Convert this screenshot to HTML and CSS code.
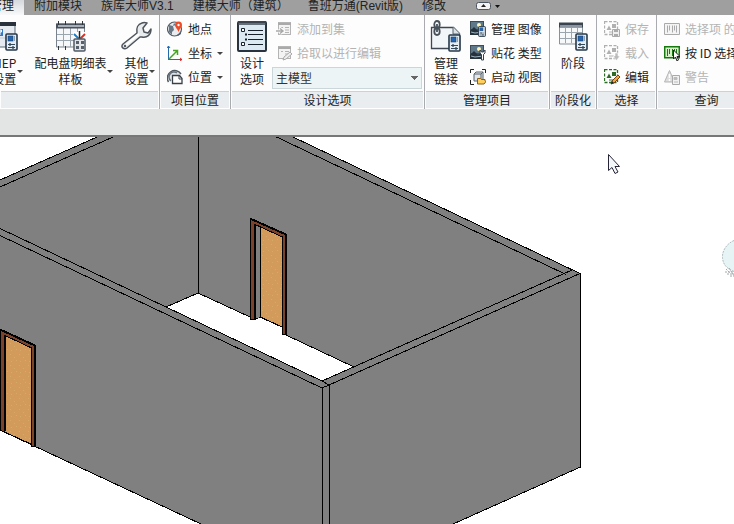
FILE: index.html
```html
<!DOCTYPE html>
<html lang="zh-CN">
<head>
<meta charset="utf-8">
<title>管理</title>
<link rel="stylesheet" href="styles.css">
</head>
<body>
<svg class="sprite" aria-hidden="true">
  <symbol id="device" viewBox="0 0 13 18">
    <rect x="1" y="1" width="11" height="16" rx="1" fill="#e4edf3" stroke="#26384a" stroke-width="1.6"/>
    <rect x="3" y="3" width="5" height="5" fill="#2465ad" stroke="#173f70" stroke-width=".6"/>
    <path d="M9.500 3v5" stroke="#8da0b0"/>
    <path d="M3 11.500h7M3 14.500h7" stroke="#34495b"/>
    <path d="M5 10v3M8 13v3" stroke="#34495b" stroke-width="1.300"/>
  </symbol>
  <symbol id="photo" viewBox="0 0 14 14">
    <rect width="14" height="14" fill="#3c4d5a"/>
    <rect x="1" y="1" width="12" height="7" fill="#60798a"/>
    <circle cx="9" cy="4" r="2" fill="#fff6b8"/>
    <path d="M0 10l4-4 4 4 3-2 3 3v3H0z" fill="#26323a"/>
    <path d="M1 11l4 1 8-1" stroke="#9fb5c2" fill="none"/>
  </symbol>
  <symbol id="selection" viewBox="0 0 16 16">
    <rect x=".5" y=".5" width="13" height="13" fill="none" stroke="currentColor" stroke-width="1.300" stroke-dasharray="3 1.500"/>
    <path d="M2.500 9l2.500-4.500L7.500 9z" class="shape"/>
    <rect x="8" y="3" width="4" height="4" class="shape"/>
    <path d="M5 11h5" stroke="currentColor"/>
  </symbol>
  <symbol id="list" viewBox="0 0 16 16">
    <rect x="2.500" y="1.500" width="12" height="12" fill="#f3f3f3" stroke="#b4b4b4"/>
    <path d="M2 3h13" stroke="#aaa" stroke-width="2"/>
    <path d="M5 6.500h2M9 6.500h4M9 9h4M9 11.500h4" stroke="#b4b4b4" stroke-width="1.200"/>
  </symbol>
</svg>

<nav class="tabs" aria-label="功能区">
  <a class="tab active" href="#">管理</a>
  <a class="tab" href="#">附加模块</a>
  <a class="tab" href="#">族库大师V3.1</a>
  <a class="tab" href="#">建模大师（建筑）</a>
  <a class="tab" href="#">鲁班万通(Revit版)</a>
  <a class="tab" href="#">修改</a>
  <button class="collapse" aria-label="最小化功能区">
    <svg width="24" height="8" viewBox="0 0 24 8"><rect x=".5" y=".5" width="14" height="7" rx="2" fill="#f4f4f4" stroke="#4d5560"/><path d="M5 5l2.500-3L10 5z" fill="#222"/><path d="M19 3h5l-2.500 3z" fill="#111"/></svg>
  </button>
</nav>

<main class="ribbon">
  <section class="panel">
    <div class="body first">
      <button class="big">
        <svg class="icon" viewBox="0 0 32 32"><rect x="1" y="3" width="26" height="24" fill="#e5ebf0" stroke="#5b6876"/><path d="M0 4h28" stroke="#29323c" stroke-width="4"/><path d="M1 18h26" stroke="#c3ccd3"/><rect x="5" y="9" width="10" height="7" fill="#3678c0"/><path d="M12 15v-5h1.500v2H12" stroke="#fff" fill="none"/><use href="#device" x="17" y="13" width="13" height="18"/></svg>
        <span class="label">MEP<br>设置</span><span class="arrow"></span>
      </button>
      <button class="big">
        <svg class="icon" viewBox="0 0 32 32"><path d="M2.500 4h28v23h-28z" fill="#f5f7f9" stroke="#7a838d"/><path d="M3 14.500h27M3 20.500h27M9.500 8v19M16.500 8v19M23.500 8v19" stroke="#9ba5ae"/><path d="M2 6h29" stroke="#48515c" stroke-width="5"/><path d="M4 6h26" stroke="#a7b0b9" stroke-width="2"/><path d="M4.500 1v4M11.500 1v4M21.500 1v4M28.500 1v4M4.500 26v4M11.500 26v4" stroke="#303740"/><path d="M19 12h12v8H19z" fill="#fff"/><path d="M20 14l5 5" stroke="#1581cf" stroke-width="2"/><path d="M31 14l-5 5" stroke="#e32b20" stroke-width="2"/><path d="M25.500 11v8" stroke="#222" stroke-width="1.500"/><rect x="20" y="19" width="11" height="12" rx="1" fill="#e1e5e8" stroke="#505b65" stroke-width="1.500"/><path d="M22 21h3v3h-3zM27 21h3v3h-3zM22 26h3v3h-3zM27 26h3v3h-3z" fill="#56616b"/></svg>
        <span class="label">配电盘明细表<br>样板</span><span class="arrow"></span>
      </button>
      <button class="big">
        <svg class="icon" viewBox="0 0 32 32"><path d="M3 24L17 13c-1-5 1-9 5-10 2-1 5 0 5 0l-4 5 1 4 4 1 3-4c0 6-4 9-9 8l-2 0L7 28c-3 2-7-1-4-4z" fill="#e9ecef" stroke="#4d545c" stroke-width="1.500" stroke-linejoin="round"/><path d="M6 25L19 14" stroke="#fff" stroke-width="2"/><circle cx="5" cy="26" r="1.200" fill="#535a62"/></svg>
        <span class="label">其他<br>设置</span><span class="arrow"></span>
      </button>
    </div>
    <h2 class="caption"></h2>
  </section>

  <section class="panel">
    <div class="body small-only">
      <div class="stack">
        <button class="small"><svg class="ico" viewBox="0 0 16 16"><circle cx="7.500" cy="8" r="7" fill="#e8ecef" stroke="#505a64" stroke-width="1.200"/><path d="M2 4l4 1 1 4-2 2v3L2 11zM7 2l2 2-3 1z" fill="#687785"/><path d="M10 14l4-3v2l-3 2z" fill="#526170"/><path d="M11.500 11.500C11 8 8 6.500 8 4a3.500 3.500 0 017 0c0 2.500-3 4-3.500 7.500z" fill="#ef4b27"/><circle cx="11.500" cy="4" r="1.200" fill="#fff"/></svg>地点</button>
        <button class="small"><svg class="ico" viewBox="0 0 16 16"><path d="M1.500 1v14" stroke="#2369ab"/><path d="M0 3l1.500-2L3 3" fill="none" stroke="#2369ab"/><path d="M2 14.500h13M13 13l2 1.500-2 1.500" stroke="#d92929" fill="none"/><path d="M2 14l8-8M6 5.500h4.500V10" stroke="#45a51e" fill="none" stroke-width="1.500"/></svg>坐标<span class="arrow"></span></button>
        <button class="small"><svg class="ico" viewBox="0 0 16 16"><path d="M1.500 13A7 7 0 1114 5" fill="#e2e5e7" stroke="#505963" stroke-width="1.400"/><path d="M4 12a5 5 0 016-8" fill="none" stroke="#65717a" stroke-width="1.500"/><path d="M5.500 14.500v-8h7l2.500 3v5z" fill="#fff" stroke="#38414a" stroke-width="1.300"/><path d="M12 7v3h3" fill="none" stroke="#38414a"/></svg>位置<span class="arrow"></span></button>
      </div>
    </div>
    <h2 class="caption">项目位置</h2>
  </section>

  <section class="panel">
    <div class="body options">
      <button class="big">
        <svg class="icon" viewBox="0 0 32 32"><rect x="2" y="2" width="28" height="29" rx="1" fill="#dce9f3" stroke="#28333f" stroke-width="2"/><path d="M2 3h28" stroke="#3b444e" stroke-width="4"/><path d="M3 4h26" stroke="#8d98a3"/><path d="M12 10.500h15M12 14.500h15M12 19.500h15M12 24.500h15" stroke="#17212b"/><path d="M5.500 8.500h3v3h-3zM5.500 22.500h3v3h-3z" fill="#fff" stroke="#17212b"/><path d="M9 13.500h2v2H9zM9 18.500h2v2H9z" fill="#17212b"/></svg>
        <span class="label">设计<br>选项</span>
      </button>
      <div class="stack">
        <button class="small" disabled><svg class="ico" viewBox="0 0 16 16"><use href="#list"/><path d="M0 10h5M4 7.500l3 2.500-3 2.500" stroke="#fff" stroke-width="3" fill="none"/><path d="M0 10h6M4 7.500l3 2.500-3 2.500" stroke="#a9a9a9" stroke-width="1.500" fill="none"/></svg>添加到集</button>
        <button class="small" disabled><svg class="ico" viewBox="0 0 16 16"><use href="#list"/><path d="M7 15l1-3 6-5 2 2-6 5z" fill="#eee" stroke="#aaa"/></svg>拾取以进行编辑</button>
        <select class="choice" aria-label="设计选项"><option>主模型</option></select>
      </div>
    </div>
    <h2 class="caption">设计选项</h2>
  </section>

  <section class="panel">
    <div class="body project">
      <button class="big">
        <svg class="icon" viewBox="0 0 32 32"><path d="M1.500 7.500h22l6 6v15h-28z" fill="#f3f6f8" stroke="#3f4852" stroke-width="1.300"/><path d="M23 7v7h7" fill="#dce2e7" stroke="#59636d"/><g fill="none" stroke="#48515a" stroke-width="1.800"><ellipse cx="7" cy="4.500" rx="2.700" ry="3.500"/><ellipse cx="7" cy="11.500" rx="2.700" ry="3.500"/><path d="M7 4v8"/></g><use href="#device" x="18" y="14" width="13" height="18"/></svg>
        <span class="label">管理<br>链接</span>
      </button>
      <div class="stack">
        <button class="small"><svg class="ico" viewBox="0 0 16 16"><use href="#photo" width="14" height="14"/><use href="#device" x="8" y="5" width="8" height="11"/></svg>管理 图像</button>
        <button class="small"><svg class="ico" viewBox="0 0 16 16"><use href="#photo" width="14" height="14"/><path d="M10 5v3l1.500 1.500V15h2V9.500L15 8V5l-1.500 2h-2z" fill="#fff" stroke="#34414d"/></svg>贴花 类型</button>
        <button class="small"><svg class="ico" viewBox="0 0 16 16"><path d="M.5 4V.5H4M12 .5h3.500V4M.5 11v4.500H4" fill="none" stroke="#222"/><path d="M4 5l2-2h7v7l-2 2H4z" fill="#e2e7ea" stroke="#59636d"/><path d="M4 5h7v7M11 5l2-2" fill="none" stroke="#59636d"/><path d="M7.500 15V9.500h3l1 1H15v1.500l1 .5-2 2.500z" fill="#ffd15c" stroke="#8c5c14"/></svg>启动 视图</button>
      </div>
    </div>
    <h2 class="caption">管理项目</h2>
  </section>

  <section class="panel">
    <div class="body phase">
      <button class="big">
        <svg class="icon" viewBox="0 0 32 32"><path d="M2.500 4h23v20h-23z" fill="#f6f8f9" stroke="#87919b"/><path d="M3 12.500h22M3 18.500h22M8.500 8v15M14.500 8v15M20.500 8v15" stroke="#9ca5ae"/><path d="M2 5h24" stroke="#3a444f" stroke-width="5"/><path d="M3 6h22" stroke="#8a95a1" stroke-width="2"/><use href="#device" x="18" y="13" width="13" height="18"/></svg>
        <span class="label">阶段</span>
      </button>
    </div>
    <h2 class="caption">阶段化</h2>
  </section>

  <section class="panel">
    <div class="body small-only">
      <div class="stack">
        <button class="small" disabled><svg class="ico" viewBox="0 0 16 16"><use href="#selection"/><path d="M8.500 8.500h7v7h-7z" fill="#eee" stroke="#aaa"/><path d="M10 9h4v2h-4zM10 13h4v2h-4z" fill="#aaa"/></svg>保存</button>
        <button class="small" disabled><svg class="ico" viewBox="0 0 16 16"><use href="#selection"/><path d="M11 8h3v3h2l-3.500 4.500L9 11h2z" fill="#bbb" stroke="#fff" stroke-width=".6"/></svg>载入</button>
        <button class="small green"><svg class="ico" viewBox="0 0 16 16"><use href="#selection"/><path d="M7 15l1-3 6-6 2 2-6 6z" fill="#f3a53b" stroke="#704719"/><path d="M7 15l1-3 2 2z" fill="#222"/></svg>编辑</button>
      </div>
    </div>
    <h2 class="caption">选择</h2>
  </section>

  <section class="panel">
    <div class="body small-only">
      <div class="stack">
        <button class="small" disabled><svg class="ico" viewBox="0 0 16 16"><path d="M.5 2.500h15v11H.5z" fill="#f4f4f4" stroke="#aaa"/><path d="M3.500 4.500v7M5.500 4.500v5M8.500 4.500v7M10.500 4.500v5M12.500 4.500v7" stroke="#aaa"/></svg>选择项 的 ID</button>
        <button class="small"><svg class="ico" viewBox="0 0 16 16"><path d="M.7 1.700h14.600v11H.7z" fill="#d4f2c5" stroke="#16780f" stroke-width="1.500"/><path d="M3.500 4v7M5.500 4v5M8.500 4v7M10.500 4v5M12.500 4v7" stroke="#16780f"/><path d="M9.500 5v9l2-2 1.500 4 1.500-1-1.500-3.500H16z" fill="#fff" stroke="#222"/></svg>按 ID 选择</button>
        <button class="small" disabled><svg class="ico" viewBox="0 0 16 16"><path d="M5.500 1.500L.5 13h10z" fill="#ddd" stroke="#b5b5b5" stroke-linejoin="round"/><path d="M5.500 5v4M5.500 10v2" stroke="#fff" stroke-width="1.500"/><path d="M8.500 6.500h7v9h-7z" fill="#f2f2f2" stroke="#aaa"/><path d="M10 8.500h3v2h-3zM10 13h4" fill="#bbb" stroke="#bbb"/></svg>警告</button>
      </div>
    </div>
    <h2 class="caption">查询</h2>
  </section>
</main>

<div class="optionbar"></div>

<div class="view">
  <svg class="scene" viewBox="0 137 734 387" preserveAspectRatio="xMinYMin slice" role="img" aria-label="三维视图">
    <defs>
      <pattern id="grain" width="9" height="11" patternUnits="userSpaceOnUse"><rect width="9" height="11" fill="#d29b5b"/><path d="M1 2h1v1H1zM5 5h1v1H5zM2 9h1v1H2zM7 8h1v1H7z" fill="#d5aa68"/></pattern>
    </defs>
    <g shape-rendering="crispEdges">
      <path d="M97 137L0 180V430L201 524H453L580 467V273L293 137z" fill="#808080"/>
      <path d="M198 293L166 307 322 381 354 367 286 335 282 327 260 317 253 320 250 317z" fill="#fff"/>
      <g fill="none" stroke="#000">
        <path d="M97 137L0 180M113 137L0 187M198.500 137V293M0 228.500L166 307 322 381 329 385M0 235.500L322 388 329 385 580 273.500 293 137M276.500 137L566 274.500M322 381L572 270M322.500 388V524M329.500 385V524M580.500 273V467L453 524M0 430L201 524"/>
        <path d="M166 307L198 293 250 317 253 320 260 317 282 327M286 335L354 367"/>
      </g>
      <path d="M255 224L260 227V317L255 319z" fill="#808080"/>
      <path d="M260.500 226L282 236V327L260.500 317z" fill="url(#grain)" stroke="#000"/>
      <path d="M250.500 218.500L286 234V334H282.500V237L254 224V319.500H250.500z" fill="#7b432c" stroke="#000"/>
      <path d="M250 218.500L286 234.500M285.500 234V334M254.500 224V320" stroke="#000" stroke-width="2"/>
      <path d="M4.500 335L31 347V444L4.500 432z" fill="url(#grain)" stroke="#000"/>
      <path d="M.5 329.500L35 345V446H31.500V348L4 335V432L.5 430z" fill="#7b432c" stroke="#000"/>
      <path d="M0 329.500L35 345.500M34.500 345V446M4.500 335V431" stroke="#000" stroke-width="2"/>
    </g>
    <path d="M608.500 154.500v16l3.500-3 3 6 3-1.500-3-5.500h4.500z" fill="#f5f8fa" stroke="#252537"/>
    <path d="M734 240.500c-7 3-12 10-11.500 17 .5 7 4 11 11.500 14z" fill="#e7f4f5"/>
    <path d="M734 240.500c-7 3-12 10-11.500 17 .5 7 4 11 11.500 14" fill="none" stroke="#aebbc0" stroke-dasharray="2 1"/>
    <path d="M725 272h9M727 274h7M730 276h4M729 268l5 8M726 269l4 4" stroke="#a2a7aa" stroke-dasharray="2 1"/>
  </svg>
</div>
</body>
</html>
```
FILE: styles.css
```css
* { box-sizing: border-box; }
body {
  margin: 0;
  height: 100vh;
  display: flex;
  flex-direction: column;
  overflow: hidden;
  background: #fff;
  color: #222;
  font: 12px/16px "Noto Sans CJK SC", "Liberation Sans", sans-serif;
}
.sprite { display: none; }
svg { display: block; }
button {
  margin: 0;
  padding: 0;
  border: 0;
  background: none;
  color: inherit;
  font: inherit;
  white-space: nowrap;
}
button:disabled { color: #b4b4b4; }

.tabs {
  flex: none;
  display: flex;
  height: 15px;
  background: #9f9f9f;
  font-family: "Liberation Sans", "Noto Sans CJK SC", sans-serif;
}
.tab {
  flex: none;
  height: 15px;
  padding: 0 10px 0 9px;
  color: #222;
  line-height: 12px;
  text-decoration: none;
  white-space: nowrap;
}
.tab.active {
  margin: 0 1px 0 -19px;
  background: linear-gradient(#d5d8dc, #f8f9fa);
}
.collapse { align-self: flex-start; margin: 2px 0 0 20px; }

.ribbon {
  flex: none;
  display: grid;
  grid-template-columns: 160px 71px 194px 125px 47px 60px minmax(100px, 1fr);
  overflow: hidden;
  background: #fdfdfd;
}
.panel {
  display: flex;
  flex-direction: column;
  border-right: 1px solid #a9abb0;
  overflow: hidden;
}
.body {
  display: flex;
  align-items: flex-start;
  height: 76px;
  padding-top: 2px;
}
.body.first { margin-left: -8px; gap: 11px; }
.body.small-only { padding-left: 7px; }
.body.options { padding-left: 5px; gap: 4px; }
.body.options .small { padding-left: 4px; }
.body.project { padding-left: 5px; gap: 8px; }
.body.phase { padding-left: 7px; }
.caption {
  height: 18px;
  margin: 0 1px;
  border-top: 1px solid #cdd0d8;
  border-bottom: 1px solid #fff;
  background: #e9edf0;
  font-size: 12px;
  font-weight: 400;
  line-height: 15px;
  text-align: center;
}

.big {
  display: grid;
  grid-template-columns: auto auto;
  row-gap: 3px;
  justify-items: center;
  align-items: center;
  padding-top: 3px;
}
.icon { width: 32px; height: 32px; }
.first .icon { margin: 0 -4px; }
.label { grid-row: 2; grid-column: 1; }
.arrow {
  border: 3px solid transparent;
  border-top-color: #444;
  border-bottom-width: 0;
  width: 6px;
  height: 3px;
}
.big .arrow { grid-row: 2; grid-column: 2; margin-left: 1px; }
.stack { display: flex; flex-direction: column; align-items: flex-start; }
.small {
  display: flex;
  align-items: center;
  gap: 5px;
  height: 24px;
}
.ico { width: 16px; height: 16px; color: #222; }
.shape { fill: currentColor; }
.green .ico { color: #2c6b26; }
.small:disabled .ico { color: #b0b0b0; }
.choice {
  appearance: none;
  width: 150px;
  height: 22px;
  margin-top: 2px;
  padding: 0 3px;
  border: 1px solid #cbd6da;
  border-radius: 0;
  color: #333;
  font: inherit;
  background:
    linear-gradient(to bottom right, #666 50%, transparent 50%) right 2px center / 4px 4px no-repeat,
    linear-gradient(to bottom left, #666 50%, transparent 50%) right 6px center / 4px 4px no-repeat,
    #ecf4f5;
}

.optionbar {
  flex: none;
  height: 28px;
  background: #e2e5e4;
  border-bottom: 2px solid #777;
}
.view { flex: 1; min-height: 0; overflow: hidden; background: #fff; }
.scene { width: 100%; height: 100%; }
```
